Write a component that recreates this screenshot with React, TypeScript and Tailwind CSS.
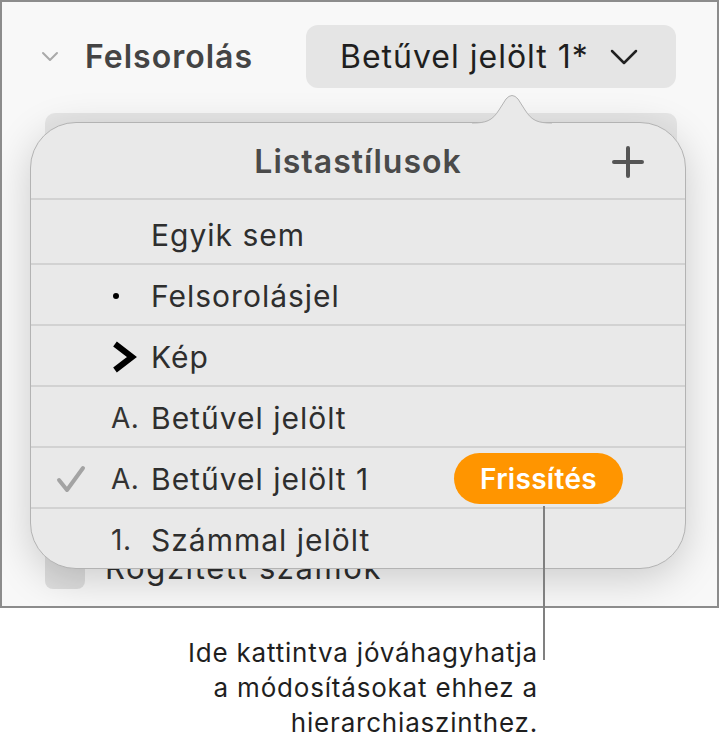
import React from 'react';

type Row = {
  label: string;
  marker?: React.ReactNode;
  checked?: boolean;
  action?: string;
  height: string;
};

const font = { fontFamily: 'Inter, "Noto Sans", sans-serif' };

const KepMarker = () => (
  <svg width="26" height="32" viewBox="0 0 26 32" className="block">
    <path d="M4 3 L21 16 L4 29" fill="none" stroke="#000" strokeWidth="6" strokeLinejoin="miter" />
  </svg>
);

const rows: Row[] = [
  { label: 'Egyik sem', height: 'h-[65px] pt-[7px]' },
  { label: 'Felsorolásjel', marker: <span className="block w-[6px] h-[6px] rounded-full bg-black ml-[2px]" />, height: 'h-[61px] pt-[3px]' },
  { label: 'Kép', marker: <KepMarker />, height: 'h-[61px] pt-[3px]' },
  { label: 'Betűvel jelölt', marker: 'A.', height: 'h-[61px] pt-[3px]' },
  { label: 'Betűvel jelölt 1', marker: 'A.', checked: true, action: 'Frissítés', height: 'h-[61px] pt-[3px]' },
  { label: 'Számmal jelölt', marker: '1.', height: 'h-[61px] pt-[3px]' },
];

const Check = () => (
  <svg width="30" height="28" viewBox="0 0 30 28" className="block">
    <path d="M3 15 L11 25 L27 3" fill="none" stroke="#a3a3a3" strokeWidth="4" strokeLinecap="round" strokeLinejoin="round" />
  </svg>
);

// little beak that points from the popover up to the popup button
const Beak = () => (
  <svg width="80" height="32" viewBox="0 0 80 32" className="absolute left-[441px] top-[-29px]">
    <path d="M0 29 C14 29 20 27 27 16 L34 5 Q40 -2 46 5 L53 16 C60 27 66 29 80 29 L80 32 L0 32 Z" fill="#e9e9e9" />
    <path d="M0 29 C14 29 20 27 27 16 L34 5 Q40 -2 46 5 L53 16 C60 27 66 29 80 29" fill="none" stroke="#b3b3b3" strokeWidth="1" />
  </svg>
);

const ListStylesPopover = () => (
  <div className="absolute left-[28px] top-[120px] w-[656px] h-[447px] rounded-[46px] border border-[#b3b3b3] bg-[#e9e9e9] shadow-[0_10px_40px_rgba(0,0,0,0.18)]">
    <Beak />
    <div className="relative h-[75px] flex items-center justify-center pt-[3px]">
      <span className="text-[32px] font-semibold text-[#4a4a4a] tracking-[1px]">Listastílusok</span>
      <svg width="32" height="32" viewBox="0 0 32 32" className="absolute left-[581px] top-[23px]">
        <path d="M16 2 V30 M2 16 H30" stroke="#555" strokeWidth="4" strokeLinecap="round" />
      </svg>
    </div>
    {rows.map((row) => (
      <div key={row.label} className={`relative flex items-center border-t-2 border-[#d2d2d2] ${row.height}`}>
        <div className="w-[80px] flex justify-center">{row.checked && <Check />}</div>
        <div className="w-[40px] flex items-center text-[28px] text-[#333] tracking-[0.5px]">{row.marker}</div>
        <span className="text-[30px] text-[#2e2e2e] tracking-[1px]">{row.label}</span>
        {row.action && (
          <button className="absolute left-[423px] top-[5px] w-[169px] h-[51px] rounded-full bg-[#ff9500] text-white text-[28px] font-semibold tracking-[0.3px]">
            {row.action}
          </button>
        )}
      </div>
    ))}
  </div>
);

export default function App() {
  return (
    <div className="relative w-[721px] h-[742px] bg-white" style={font}>
      <div className="relative w-[719px] h-[608px] border-2 border-[#8c8c8c] bg-[#f8f8f8] overflow-hidden">
        {/* section header */}
        <div className="flex items-center pt-[23px] pl-[39px] pr-[41px]">
          <svg width="18" height="12" viewBox="0 0 18 12" className="block">
            <path d="M2 2 L9 9 L16 2" fill="none" stroke="#aaa" strokeWidth="2" strokeLinecap="round" strokeLinejoin="round" />
          </svg>
          <span className="ml-[26px] text-[32px] font-semibold text-[#444] tracking-[1px]">Felsorolás</span>
          <div className="ml-auto w-[370px] h-[63px] rounded-[12px] bg-[#e5e5e5] flex items-center pl-[34px]">
            <span className="text-[32px] text-[#1f1f1f] tracking-[1px]">Betűvel jelölt 1*</span>
            <svg width="28" height="16" viewBox="0 0 28 16" className="block ml-auto mr-[38px]">
              <path d="M2 2 L14 14 L26 2" fill="none" stroke="#222" strokeWidth="2.5" strokeLinecap="round" strokeLinejoin="round" />
            </svg>
          </div>
        </div>

        {/* field under the popover */}
        <div className="mt-[25px] ml-[43px] w-[632px] h-[60px] rounded-[10px] bg-[#e6e6e6]" />

        {/* checkbox row, mostly covered */}
        <div className="mt-[372px] ml-[43px] flex items-center gap-[20px]">
          <div className="w-[40px] h-[42px] rounded-[8px] bg-[#dedede]" />
          <span className="text-[31px] text-[#2e2e2e] tracking-[1.6px]">Rögzített számok</span>
        </div>

        <ListStylesPopover />
      </div>

      {/* callout */}
      <div className="absolute left-[543px] top-[506px] w-[2px] h-[154px] bg-[#808080]" />
      <div className="mt-[27px] w-[538px] text-right text-[26px] leading-[35px] tracking-[0.8px] text-[#1f1f1f]">
        <p>Ide kattintva jóváhagyhatja</p>
        <p>a módosításokat ehhez a</p>
        <p>hierarchiaszinthez.</p>
      </div>
    </div>
  );
}
